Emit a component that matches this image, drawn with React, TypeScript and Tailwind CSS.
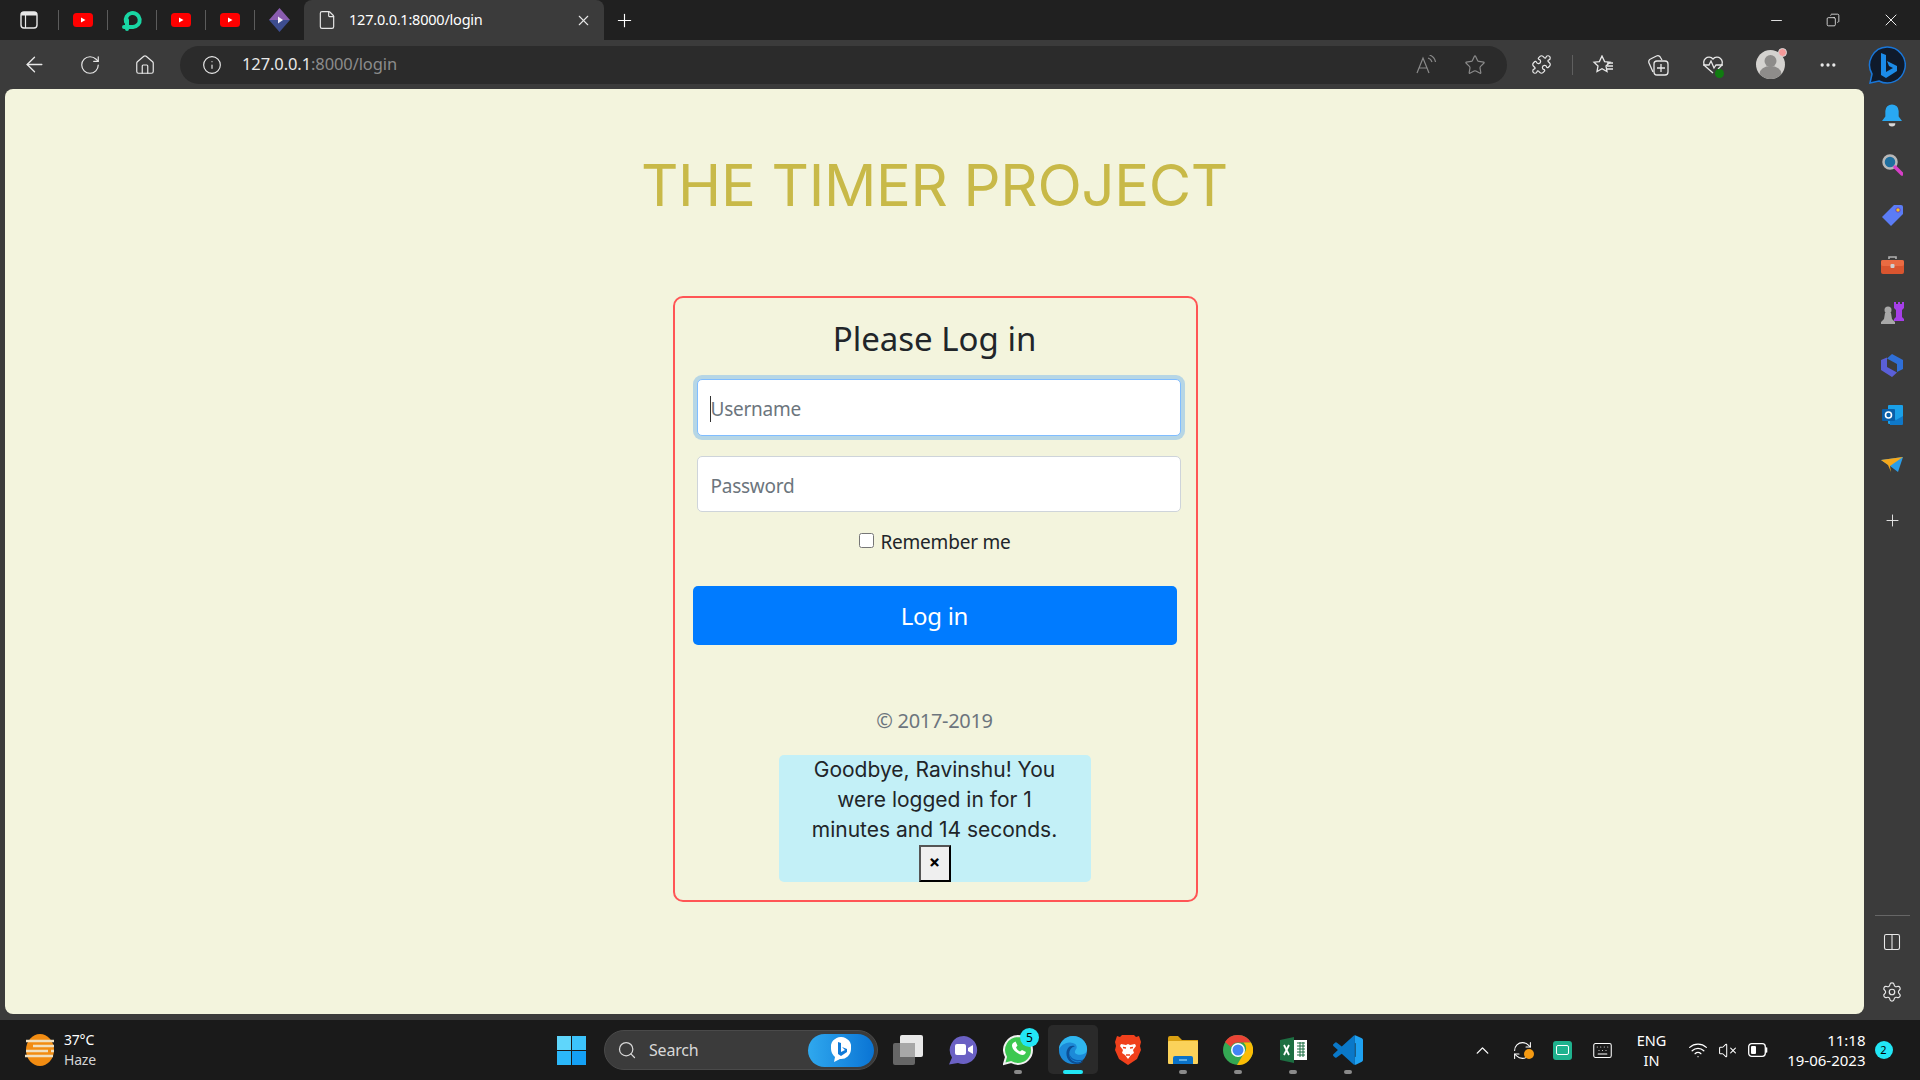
import React from 'react';
import {
  ArrowLeft, RotateCw, House, Info, Star, Puzzle, Ellipsis, Plus, X, Minus, Copy, File,
  Settings, Search, ChevronUp, Keyboard, Wifi, VolumeX, RefreshCw, Columns2,
} from 'lucide-react';

const chromeFont = { fontFamily: '"Noto Sans", sans-serif' };

const YouTube = () => (
  <svg width="20" height="14" viewBox="0 0 20 14">
    <rect width="20" height="14" rx="3.5" fill="#f00" />
    <path d="M8 4.5 12.5 7 8 9.5z" fill="#fff" />
  </svg>
);

const LoopLogo = () => (
  <svg width="22" height="24" viewBox="0 0 22 24" fill="none">
    <path d="M5 14a7 7 0 1 1 7 5H3" stroke="#19d6a4" strokeWidth="4" strokeLinecap="round" />
    <path d="M6 12v9" stroke="#19d6a4" strokeWidth="4" strokeLinecap="round" />
  </svg>
);

const Diamond = () => (
  <svg width="21" height="24" viewBox="0 0 21 24">
    <path d="M10.5 0 21 12H0z" fill="#8a5cb0" />
    <path d="M0 12h21L10.5 24z" fill="#3d4d8f" />
    <path d="M9 8.5 14 12l-5 3.5z" fill="#f4f0fa" />
  </svg>
);

const BingLogo = ({ size = 34 }: { size?: number }) => (
  <svg width={size} height={size} viewBox="0 0 38 38" fill="none">
    <defs>
      <linearGradient id="bingB" x1="12" y1="5" x2="28" y2="30">
        <stop offset="0" stopColor="#1b8be8" />
        <stop offset="1" stopColor="#37c6f0" />
      </linearGradient>
    </defs>
    <path d="M19 1a18 18 0 1 1-8 34L2 37l2-9A18 18 0 0 1 19 1z" fill="#0f1a2b" stroke="#1976d8" strokeWidth="1.5" />
    <path d="M13 7l5 2v17l7-4-4-2-2-5 10 5v5l-11 7-5-3z" fill="url(#bingB)" />
  </svg>
);

const Sep = () => <div className="h-[20px] w-px bg-[#5c5c5c]" />;

const FavCell = ({ children, sep = true }: { children: React.ReactNode; sep?: boolean }) => (
  <div className="flex h-full w-[49px] items-center">
    <div className="flex w-[48px] justify-center">{children}</div>
    {sep && <Sep />}
  </div>
);

const TabStrip = () => (
  <div className="flex h-[40px] items-center bg-[#202020] text-white" style={chromeFont}>
    <div className="flex w-[59px] items-center">
      <div className="flex w-[58px] justify-center">
        <svg width="18" height="18" viewBox="0 0 18 18" fill="none">
          <rect x="1" y="1" width="16" height="16" rx="3" stroke="#e8e8e8" strokeWidth="1.4" />
          <path d="M1 4.5h16V4a3 3 0 0 0-3-3H4a3 3 0 0 0-3 3z" fill="#e8e8e8" />
          <path d="M5.5 4v13" stroke="#e8e8e8" strokeWidth="1.2" />
        </svg>
      </div>
      <Sep />
    </div>
    <FavCell><YouTube /></FavCell>
    <FavCell><LoopLogo /></FavCell>
    <FavCell><YouTube /></FavCell>
    <FavCell><YouTube /></FavCell>
    <FavCell sep={false}><Diamond /></FavCell>
    <div className="flex h-full w-[300px] items-center rounded-t-[8px] bg-[#3b3b3b] pl-[13px] pr-[12px]">
      <File size={20} strokeWidth={1.4} className="text-[#e6e6e6]" />
      <span className="ml-[12px] flex-1 text-[14.5px] tracking-[-0.22px]">127.0.0.1:8000/login</span>
      <X size={17} strokeWidth={1.5} className="text-[#e6e6e6]" />
    </div>
    <div className="flex w-[40px] justify-center">
      <Plus size={21} strokeWidth={1.3} />
    </div>
    <div className="flex-1" />
    <div className="flex w-[58px] justify-center pl-[2px]"><Minus size={17} strokeWidth={1.2} /></div>
    <div className="flex w-[58px] justify-center"><Copy size={14} strokeWidth={1.3} className="-scale-x-100" /></div>
    <div className="flex w-[58px] justify-center"><X size={20} strokeWidth={1.1} /></div>
  </div>
);

const ToolCell = ({ w, children }: { w: string; children: React.ReactNode }) => (
  <div className={`flex h-full items-center justify-center ${w}`}>{children}</div>
);

const Toolbar = () => (
  <div className="flex h-[49px] items-center bg-[#3b3b3b] text-[#e8e8e8]" style={chromeFont}>
    <div className="ml-[7px] flex h-full w-[55px] items-center justify-center"><ArrowLeft size={25} strokeWidth={1.3} /></div>
    <div className="flex h-full w-[55px] items-center justify-center"><RotateCw size={22} strokeWidth={1.3} /></div>
    <div className="flex h-full w-[55px] items-center justify-center"><House size={22} strokeWidth={1.3} /></div>
    <div className="ml-[8px] flex h-[38px] w-[1327px] items-center rounded-full bg-[#2b2b2b] pl-[22px] pr-[21px]">
      <Info size={20} strokeWidth={1.4} />
      <span className="ml-[20px] flex-1 text-[16.5px] tracking-[-0.1px]">
        127.0.0.1<span className="text-[#8c8c8c]">:8000/login</span>
      </span>
      <svg width="22" height="20" viewBox="0 0 22 20" fill="none" stroke="#8a8a8a" strokeWidth="1.2" className="mr-[26px]">
        <path d="M1 18 7 3l6 15M3.5 13h7" />
        <path d="M12 3a6 6 0 0 1 4 4M13.5 0a9 9 0 0 1 6 7" />
      </svg>
      <Star size={22} strokeWidth={1.3} className="text-[#8a8a8a]" />
    </div>
    <div className="ml-[7px] flex h-full w-[55px] items-center justify-center"><Puzzle size={21} strokeWidth={1.4} /></div>
    <div className="flex h-full w-[6px] items-center pl-[3px]"><div className="h-[20px] w-px bg-[#5f5f5f]" /></div>
    <ToolCell w="w-[55px]">
      <svg width="22" height="20" viewBox="0 0 22 20" fill="none" stroke="#e8e8e8" strokeWidth="1.3">
        <path d="M10 1l2.6 5.6 5.4.6-4 3.8 1 5.6-5-2.8-5 2.8 1-5.6-4-3.8 5.4-.6z" />
        <path d="M15 8h6M15 11h6M14 14h7" />
      </svg>
    </ToolCell>
    <ToolCell w="w-[55px]">
      <svg width="22" height="22" viewBox="0 0 22 22" fill="none" stroke="#e8e8e8" strokeWidth="1.3">
        <path d="M6 18 2 9a3 3 0 0 1 1.5-4l6-3a3 3 0 0 1 4 1.5L15 6" />
        <rect x="7" y="7" width="14" height="14" rx="3" />
        <path d="M14 10v8M10 14h8" />
      </svg>
    </ToolCell>
    <ToolCell w="w-[55px]">
      <div className="relative">
        <svg width="22" height="20" viewBox="0 0 22 20" fill="none" stroke="#e8e8e8" strokeWidth="1.3">
          <path d="M11 18 3 11a5.2 5.2 0 0 1 8-7 5.2 5.2 0 0 1 8 7l-3 3" />
          <path d="M1 10h6l2-4 3 7 2-3h7" />
        </svg>
        <div className="absolute -bottom-[3px] right-0 h-[9px] w-[9px] rounded-full bg-[#107c10]" />
      </div>
    </ToolCell>
    <ToolCell w="w-[60px]">
      <div className="relative">
        <svg width="29" height="29" viewBox="0 0 29 29">
          <circle cx="14.5" cy="14.5" r="14.5" fill="#d4d2cf" />
          <circle cx="14.5" cy="11" r="6" fill="#8e8c8a" />
          <path d="M3.5 24a11 8 0 0 1 22 0 14.5 14.5 0 0 1-22 0z" fill="#8e8c8a" />
        </svg>
        <div className="absolute -right-[2px] -top-[2px] h-[9px] w-[9px] rounded-full border border-[#d8d8d8] bg-[#f59a9a]" />
      </div>
    </ToolCell>
    <ToolCell w="w-[56px]"><Ellipsis size={20} strokeWidth={2} /></ToolCell>
    <div className="flex h-full flex-1 items-center justify-center pr-[2px]"><BingLogo size={38} /></div>
  </div>
);

const SideIcon = ({ children }: { children: React.ReactNode }) => (
  <div className="flex h-[50px] w-full items-center justify-center">{children}</div>
);

const Sidebar = () => (
  <div className="flex h-full w-[56px] flex-col items-center pt-[1px] text-[#e8e8e8]">
    <SideIcon>
      <svg width="20" height="23" viewBox="0 0 18 20">
        <path d="M9 0a6 6 0 0 1 6 6v5l3 4H0l3-4V6a6 6 0 0 1 6-6z" fill="#29a8f2" />
        <path d="M6 17h6a3 3 0 0 1-6 0z" fill="#d8d8d8" />
      </svg>
    </SideIcon>
    <SideIcon>
      <svg width="21" height="22" viewBox="0 0 21 22" fill="none">
        <circle cx="8" cy="8" r="6.5" fill="#1f6f9f" stroke="#b8b8b8" strokeWidth="2.5" />
        <path d="M13 13l7 7" stroke="#d63fc7" strokeWidth="3.5" strokeLinecap="round" />
      </svg>
    </SideIcon>
    <SideIcon>
      <svg width="21" height="21" viewBox="0 0 21 21">
        <path d="M12 0h7a2 2 0 0 1 2 2v7L9 21 0 12z" fill="#5b7cf5" />
        <circle cx="16" cy="5" r="2.2" fill="#f5c518" stroke="#6a3fc0" />
      </svg>
    </SideIcon>
    <SideIcon>
      <svg width="23" height="18" viewBox="0 0 23 18">
        <path d="M8 3V1h7v2" fill="none" stroke="#b0b0b0" strokeWidth="1.6" />
        <rect y="4" width="23" height="14" rx="2" fill="#d9552f" />
        <rect y="4" width="23" height="6" rx="2" fill="#ea6b42" />
        <rect x="9.5" y="8" width="4" height="4" rx="1" fill="#cfcfcf" />
      </svg>
    </SideIcon>
    <div className="flex h-[50px] w-full items-start justify-center pt-[11px]">
      <svg width="23" height="23" viewBox="0 0 23 23">
        <path d="M13 1h2v2h2V1h2v2h2V1h2v6l-2 2v7l2 2v2H13v-2l2-2V9l-2-2z" fill="#a63fe8" />
        <circle cx="7" cy="9" r="3.5" fill="#a8a8a8" />
        <path d="M4 12h6l1 6 3 3v2H0v-2l3-3z" fill="#a8a8a8" />
      </svg>
    </div>
    <SideIcon>
      <svg width="22" height="23" viewBox="0 0 22 23">
        <defs>
          <linearGradient id="mTop" x1="6" y1="0" x2="22" y2="14">
            <stop offset="0" stopColor="#2f6fd8" />
            <stop offset="1" stopColor="#35b6e8" />
          </linearGradient>
          <linearGradient id="mLeft" x1="0" y1="4" x2="12" y2="22">
            <stop offset="0" stopColor="#5a5fd8" />
            <stop offset="1" stopColor="#b46fe0" />
          </linearGradient>
        </defs>
        <path d="M11 0l11 6v9l-6 3v-8L6 4.5z" fill="url(#mTop)" />
        <path d="M0 6l6-2.500V13l10 5.500L11 23 0 16z" fill="url(#mLeft)" />
      </svg>
    </SideIcon>
    <SideIcon>
      <svg width="21" height="20" viewBox="0 0 21 20">
        <rect x="6" width="15" height="19" rx="1" fill="#1aa0e8" />
        <path d="M8 11l6 4 7-4v8a1 1 0 0 1-1 1H8z" fill="#0f78c8" />
        <rect y="4" width="13" height="12" rx="1" fill="#0a5fa8" />
        <circle cx="6.5" cy="10" r="3" fill="none" stroke="#fff" strokeWidth="1.6" />
      </svg>
    </SideIcon>
    <SideIcon>
      <svg width="22" height="16" viewBox="0 0 22 16">
        <path d="M0 3 22 0 17 15 9 9z" fill="#2a9de8" />
        <path d="M0 3l22-3L9 9l1 6-3-7z" fill="#f5a81c" />
      </svg>
    </SideIcon>
    <div className="flex h-[60px] items-center"><Plus size={19} strokeWidth={1.2} /></div>
    <div className="flex-1" />
    <div className="h-px w-[35px] bg-[#666]" />
    <div className="flex h-[58px] items-center pb-[6px]"><Columns2 size={20} strokeWidth={1.3} /></div>
    <div className="flex h-[46px] items-center pb-[10px]"><Settings size={22} strokeWidth={1.3} /></div>
  </div>
);

const LoginCard = () => (
  <div className="ml-[2px] mt-[41px] flex h-[606px] w-[525px] flex-col items-center rounded-[10px] border-2 border-[#ff5555] pr-[2px] text-[#212529]" style={chromeFont}>
    <h2 className="mt-[19px] h-[44px] text-[33px] leading-[44px]">Please Log in</h2>
    <div className="relative ml-[8px] mt-[18px] w-[484px]">
      <input
        placeholder="Username"
        className="h-[57px] w-full rounded-[5px] border border-[#80bdff] bg-white px-[13px] pt-[2px] text-[19px] tracking-[-0.25px] shadow-[0_0_0_4px_rgba(0,123,255,0.25)] outline-none placeholder:text-[#6c757d]"
      />
      <div className="absolute left-[13px] top-[17px] h-[26px] w-px bg-[#333]" />
    </div>
    <input
      placeholder="Password"
      className="ml-[8px] mt-[20px] h-[56px] w-[484px] rounded-[5px] border border-[#ced4da] bg-white px-[13px] pt-[3px] text-[19px] tracking-[-0.25px] outline-none placeholder:text-[#6c757d]"
    />
    <label className="mt-[16px] flex h-[28px] items-center text-[19px] tracking-[-0.2px]">
      <input type="checkbox" className="mb-[3px] ml-[1px] mr-[6px] h-[15px] w-[15px]" />
      Remember me
    </label>
    <button className="mt-[30px] h-[59px] w-[484px] rounded-[5px] bg-[#007bff] text-[24px] tracking-[-0.3px] text-white">Log in</button>
    <p className="mt-[61px] h-[30px] text-[20px] leading-[30px] tracking-[-0.3px] text-[#6c757d]">© 2017-2019</p>
    <div
      className="mt-[19px] flex h-[127px] w-[312px] flex-col items-center rounded-[5px] bg-[#c3f0f7] text-center text-[21px] leading-[30px] text-[#212529]"
      style={{ fontFamily: 'Inter, sans-serif' }}
    >
      <p className="whitespace-nowrap">Goodbye, Ravinshu! You<br />were logged in for 1<br />minutes and 14 seconds.</p>
      <button className="flex h-[37px] w-[32px] items-center justify-center border-2 border-t-[#555] border-l-[#555] border-r-black border-b-black bg-[#efefef] pb-[3px] text-[17px] font-bold text-black">
        ×
      </button>
    </div>
  </div>
);

const TaskIcon = ({ children, dot, active }: { children: React.ReactNode; dot?: boolean; active?: boolean }) => (
  <div className="relative flex h-[50px] w-[55px] items-center justify-center">
    {active && <div className="absolute left-[2.5px] top-0 h-[49px] w-[50px] rounded-[5px] bg-[#2a2a2a]" />}
    <div className="relative">{children}</div>
    {dot && <div className="absolute bottom-[1px] h-[4px] w-[8px] rounded-full bg-[#8a8a8a]" />}
    {active && <div className="absolute bottom-[1px] h-[4px] w-[20px] rounded-full bg-[#22e6f5]" />}
  </div>
);

const Taskbar = () => (
  <div className="flex h-[60px] items-center bg-[#1a1a1a] text-white" style={chromeFont}>
    <div className="ml-[25px] flex w-[532px] items-center">
      <svg width="30" height="32" viewBox="0 0 30 32">
        <ellipse cx="15" cy="16" rx="14" ry="16" fill="#f28c12" />
        <path d="M1 7h28M8 12h21M1 17h22M26 17h3M0 22h28" stroke="#f0e0c0" strokeWidth="2.5" />
      </svg>
      <div className="ml-[9px] text-[14px] leading-[20px] tracking-[-0.2px]">
        <div>37°C</div>
        <div className="text-[#d4d4d4]">Haze</div>
      </div>
    </div>
    <div className="grid h-[29px] w-[29px] grid-cols-2 gap-[1px]">
      <div className="bg-[#5fd6fb]" />
      <div className="bg-[#3cc3fb]" />
      <div className="bg-[#2bb8fa]" />
      <div className="bg-[#14a0f5]" />
    </div>
    <div className="ml-[18px] flex h-[40px] w-[274px] items-center rounded-full border border-[#4a4a4a] bg-[#3b3b3b] pl-[12px] pr-[3px] text-[#d8d8d8]">
      <Search size={20} strokeWidth={1.5} />
      <span className="ml-[12px] flex-1 text-[16px] tracking-[-0.2px]">Search</span>
      <div className="flex h-[33px] w-[66px] items-center justify-center rounded-full bg-gradient-to-r from-[#2fa8ee] to-[#0a74d4]">
        <svg width="20" height="26" viewBox="0 0 20 26">
          <path d="M10 0a10 10 0 0 1 10 12 10 10 0 0 1-11 10l-6 3 1-5A11 11 0 0 1 0 12 10 10 0 0 1 10 0z" fill="#fff" />
          <path d="M7 5l3 1v9l4-2-3-3 5 2v3l-6 4-3-2z" fill="#0f7ad8" />
        </svg>
      </div>
    </div>
    <div className="ml-[2.5px] flex">
      <TaskIcon>
        <svg width="30" height="30" viewBox="0 0 30 30">
          <rect x="0" y="8" width="22" height="22" rx="2" fill="#666" />
          <rect x="7" y="0" width="23" height="22" rx="2" fill="#e8e8e8" />
          <rect x="7" y="8" width="15" height="14" fill="#a8a8a8" />
        </svg>
      </TaskIcon>
      <TaskIcon>
        <svg width="30" height="30" viewBox="0 0 30 30">
          <path d="M16 1a14 14 0 1 1-6 27l-9 1.5 3-7A14 14 0 0 1 16 1z" fill="#6b61c4" />
          <rect x="7" y="9" width="11" height="11" rx="2" fill="#fff" />
          <path d="M20 13l5-3v9l-5-3z" fill="#fff" />
        </svg>
      </TaskIcon>
      <TaskIcon dot>
        <svg width="30" height="32" viewBox="0 0 30 32">
          <path d="M15 2a14 14 0 0 1 0 28 14 14 0 0 1-7-2l-7 2 2-7A14 14 0 0 1 15 2z" fill="#3cc850" stroke="#f0f0f0" strokeWidth="2" />
          <path d="M10 9c-2 2-1 6 3 9s7 4 9 2l1-2-4-2-2 1.5c-2-1-3-2-4-4l1.5-2-2-4z" fill="#fff" />
        </svg>
        <div className="absolute -right-[6px] -top-[6px] flex h-[19px] w-[19px] items-center justify-center rounded-full bg-[#22e6f5] text-[12px] text-black">5</div>
      </TaskIcon>
      <TaskIcon active>
        <svg width="30" height="30" viewBox="0 0 32 32">
          <defs>
            <linearGradient id="edgeTop" x1="2" y1="4" x2="30" y2="18">
              <stop offset="0" stopColor="#2fb6ee" />
              <stop offset="0.6" stopColor="#35c3c0" />
              <stop offset="1" stopColor="#63d866" />
            </linearGradient>
          </defs>
          <circle cx="16" cy="16" r="15" fill="#1c8ad8" />
          <path d="M16 1c8 0 15 6 15 14 0 4-3 6-7 6-3 0-6-1-6-3 0-2 2-3 2-5 0-4-5-5-8-5C7 8 2 12 1 16 1 8 8 1 16 1z" fill="url(#edgeTop)" />
          <path d="M12 20c0-4 2-7 6-8-5-2-9 2-9 8s5 11 11 11c3 0 5-1 7-3-7 3-15 0-15-8z" fill="#0c4f96" />
          <path d="M12 20c0 5 5 9 11 8 2 0 3-1 4-2-4 1-12 2-15-6z" fill="#0a5db0" />
        </svg>
      </TaskIcon>
      <TaskIcon>
        <svg width="26" height="30" viewBox="0 0 26 30">
          <path d="M7 0h12l2 2 3-1 2 6-1 4 1 4-4 9-9 6-9-6-4-9 1-4-1-4 2-6 3 1z" fill="#f0401c" />
          <path d="M6 9l5 1 2-1 2 1 5-1 1 2-3 4 1 3-3 2-3 4-3-4-3-2 1-3-3-4z" fill="#fff" />
          <path d="M8 12.5l3 .5M18 12.5l-3 .5M11 20h4" stroke="#f0401c" strokeWidth="1.3" />
        </svg>
      </TaskIcon>
      <TaskIcon dot>
        <svg width="30" height="28" viewBox="0 0 30 28">
          <path d="M0 2a2 2 0 0 1 2-2h8l4 4h16v4H0z" fill="#d9a012" />
          <rect y="5" width="30" height="23" rx="1" fill="#fbd25a" />
          <path d="M5 28v-6a2 2 0 0 1 2-2h16a2 2 0 0 1 2 2v6z" fill="#0a72c8" />
          <path d="M11 24h8" stroke="#7cc4f0" strokeWidth="1.5" />
        </svg>
      </TaskIcon>
      <TaskIcon dot>
        <svg width="30" height="30" viewBox="0 0 30 30">
          <circle cx="15" cy="15" r="15" fill="#34a853" />
          <path d="M15 0a15 15 0 0 1 13 7.5H15a7.5 7.5 0 0 0-7 4.5L2 7a15 15 0 0 1 13-7z" fill="#ea4335" />
          <path d="M28 7.5A15 15 0 0 1 14 30l6.5-11a7.5 7.5 0 0 0 0-11.5z" fill="#fbbc05" />
          <circle cx="15" cy="15" r="7" fill="#fff" />
          <circle cx="15" cy="15" r="5.5" fill="#4285f4" />
        </svg>
      </TaskIcon>
      <TaskIcon dot>
        <svg width="27" height="26" viewBox="0 0 27 26">
          <path d="M0 3 14 0v26L0 23z" fill="#1d6f42" />
          <path d="M14 3h13v20H14z" fill="#fff" />
          <path d="M17 6h8M17 9h8M17 12h8M17 15h8M17 18h8M20 5v15M23 5v15" stroke="#1d6f42" strokeWidth="1" />
          <path d="M4 8l5 10M9 8l-5 10" stroke="#fff" strokeWidth="1.8" />
        </svg>
      </TaskIcon>
      <TaskIcon dot>
        <svg width="30" height="30" viewBox="0 0 24 24">
          <path d="M17.5.2a1.5 1.5 0 0 0-1 .3L7 9.100 2.900 6a1 1 0 0 0-1.300.1L.3 7.300a1 1 0 0 0 0 1.400L3.900 12 .3 15.300a1 1 0 0 0 0 1.400l1.300 1.200a1 1 0 0 0 1.300.1L7 14.900l9.500 8.600a1.500 1.500 0 0 0 1 .3z" fill="#0a78c8" />
          <path d="M17.5.2a1.5 1.5 0 0 1 .7.1l4.900 2.300A1.500 1.500 0 0 1 24 4v16a1.500 1.500 0 0 1-.9 1.400l-4.900 2.300a1.500 1.500 0 0 1-.7.1v-6.300l.5-.1V6.500l-.5-.1z" fill="#1ea1f1" />
        </svg>
      </TaskIcon>
    </div>
    <div className="ml-[88px] flex w-[37px] justify-center"><ChevronUp size={21} strokeWidth={1.6} /></div>
    <div className="relative flex w-[44px] justify-center">
      <RefreshCw size={21} strokeWidth={1.2} />
      <div className="absolute left-[23px] top-[9px] h-[10px] w-[10px] rounded-full bg-[#f59a12]" />
    </div>
    <div className="flex w-[36px] justify-center">
      <div className="flex h-[19px] w-[19px] items-center justify-center rounded-[3px] bg-[#1fb28e]">
        <div className="h-[10px] w-[13px] rounded-[2px] border border-white" />
      </div>
    </div>
    <div className="flex w-[44px] justify-center"><Keyboard size={21} strokeWidth={1.2} /></div>
    <div className="w-[54px] text-center text-[14.5px] leading-[20px]">ENG<br />IN</div>
    <div className="flex w-[38px] justify-center"><Wifi size={20} strokeWidth={1.5} /></div>
    <div className="flex w-[22px] justify-center"><VolumeX size={19} strokeWidth={1.3} /></div>
    <div className="flex w-[38px] justify-center">
      <svg width="20" height="14" viewBox="0 0 20 14" fill="none">
        <rect x="0.7" y="0.7" width="16.6" height="12.6" rx="3" stroke="#fff" strokeWidth="1.3" />
        <rect x="3" y="3" width="5" height="8" rx="1" fill="#fff" />
        <path d="M18.5 5v4" stroke="#fff" strokeWidth="1.6" strokeLinecap="round" />
      </svg>
    </div>
    <div className="w-[89px] whitespace-nowrap text-right text-[15px] leading-[20px]">11:18<br />19-06-2023</div>
    <div className="ml-[9px] flex h-[18px] w-[18px] items-center justify-center rounded-full bg-[#22e6f5] text-[11px] text-black">2</div>
  </div>
);

export default function App() {
  return (
    <div className="flex h-[1080px] w-[1920px] flex-col overflow-hidden bg-[#3b3b3b]">
      <TabStrip />
      <Toolbar />
      <div className="flex h-[931px]">
        <main className="mb-[6px] ml-[5px] flex w-[1859px] flex-col items-center rounded-[8px] bg-[#f3f4dd]">
          <h1
            className="mt-[51px] h-[90px] text-[58px] font-normal leading-[90px] tracking-[-0.3px] text-[#c8b948]"
            style={{ fontFamily: 'Inter, sans-serif' }}
          >
            THE TIMER PROJECT
          </h1>
          <div className="h-[25px]" />
          <LoginCard />
        </main>
        <Sidebar />
      </div>
      <Taskbar />
    </div>
  );
}
